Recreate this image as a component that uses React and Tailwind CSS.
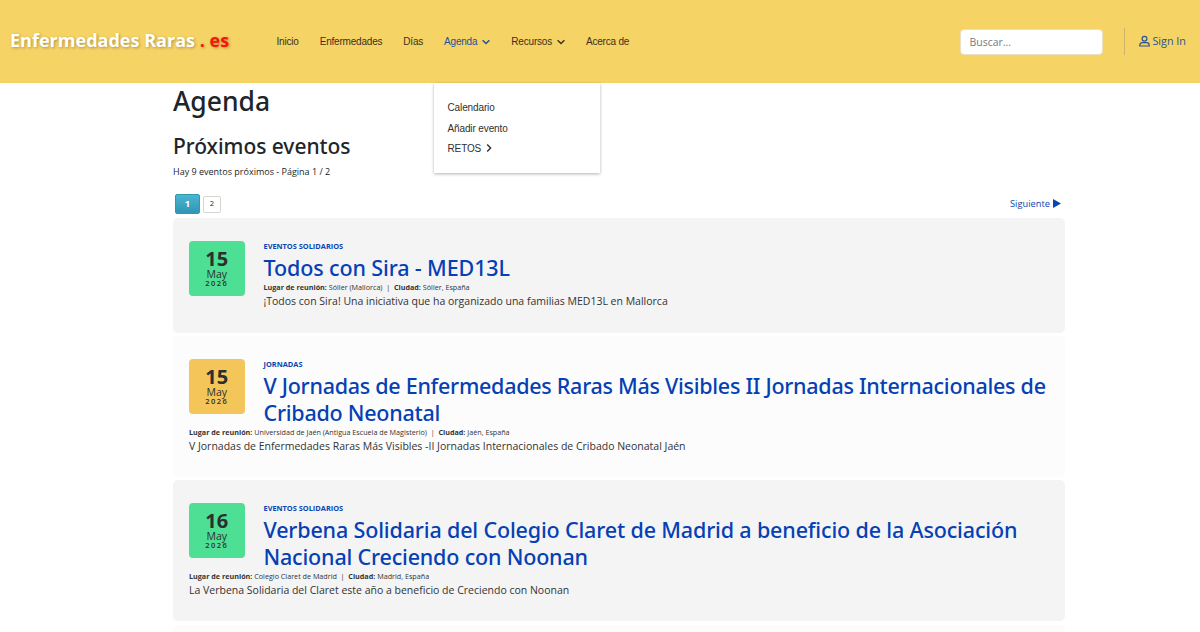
import React from "react";

const events = [
  {
    day: "15",
    category: "EVENTOS SOLIDARIOS",
    title: [{ text: "Todos con Sira - MED13L", tracking: "tracking-[-0.12px]" }],
    place: "Sóller (Mallorca)",
    city: "Sóller, España",
    text: "¡Todos con Sira! Una iniciativa que ha organizado una familias MED13L en Mallorca",
    card: "bg-[#f4f4f4] h-[114.5px]",
    badge: "bg-[#4de094]",
  },
  {
    day: "15",
    category: "JORNADAS",
    title: [
      { text: "V Jornadas de Enfermedades Raras Más Visibles II Jornadas Internacionales de", tracking: "tracking-[-0.27px]" },
      { text: "Cribado Neonatal", tracking: "tracking-[-0.25px]" },
    ],
    place: "Universidad de Jaén (Antigua Escuela de Magisterio)",
    city: "Jaén, España",
    text: "V Jornadas de Enfermedades Raras Más Visibles -II Jornadas Internacionales de Cribado Neonatal Jaén",
    card: "bg-[#fcfcfc] h-[140.5px]",
    badge: "bg-[#f4c65a]",
  },
  {
    day: "16",
    category: "EVENTOS SOLIDARIOS",
    title: [
      { text: "Verbena Solidaria del Colegio Claret de Madrid a beneficio de la Asociación", tracking: "tracking-[-0.155px]" },
      { text: "Nacional Creciendo con Noonan", tracking: "tracking-[-0.18px]" },
    ],
    place: "Colegio Claret de Madrid",
    city: "Madrid, España",
    text: "La Verbena Solidaria del Claret este año a beneficio de Creciendo con Noonan",
    card: "bg-[#f4f4f4] h-[141px]",
    badge: "bg-[#4de094]",
  },
];

function Chevron({ className }) {
  return (
    <svg viewBox="0 0 8 8" className={className} fill="none" stroke="currentColor" strokeWidth="1.4">
      <path d="M0.6 2.2 L4 5.6 L7.4 2.2" />
    </svg>
  );
}

function Header() {
  return (
    <header className="flex h-[83px] items-center bg-[#f6d365] pr-[14px] pl-[10px]">
      <div className="w-[266.5px] pb-[3px] text-[18px] font-bold tracking-[0.02px] whitespace-nowrap text-white [text-shadow:1px_1px_3px_rgba(0,0,0,0.3)]">
        Enfermedades Raras <span className="text-[#fb1508]">. es</span>
      </div>
      <nav className="relative flex items-center gap-[21px] font-['Liberation_Sans',sans-serif] text-[10px] tracking-[-0.2px] text-[#3a3120]">
        <a>Inicio</a>
        <a>Enfermedades</a>
        <a>Días</a>
        <a className="flex items-center gap-[5px] text-[#21509b]">
          Agenda <Chevron className="size-2" />
        </a>
        <a className="flex items-center gap-[5px]">
          Recursos <Chevron className="size-2" />
        </a>
        <a>Acerca de</a>
        <div className="absolute top-[49px] left-[157px] flex h-[90px] w-[166px] flex-col bg-white pt-[15px] pl-[14px] leading-[20.6px] tracking-[-0.12px] text-[#303030] shadow-[0_1px_3px_rgba(0,0,0,0.3)]">
          <a>Calendario</a>
          <a>Añadir evento</a>
          <a className="flex items-center gap-[4px]">
            RETOS <Chevron className="mb-[2px] size-2 -rotate-90" />
          </a>
        </div>
      </nav>
      <input
        className="mr-px ml-auto h-[26px] w-[143px] rounded-[4px] border border-[#eadfc0] bg-white px-2 text-[10.5px] placeholder:text-[#757b82]"
        placeholder="Buscar..."
      />
      <div className="ml-[20px] flex h-[27px] items-center gap-[2px] border-l border-[#cdb46c] pl-[14px] text-[10.8px] text-[#29548f]">
        <svg viewBox="0 0 11 12" className="mb-px h-3 w-[11px]" fill="none" stroke="currentColor" strokeWidth="1.2">
          <circle cx="5.5" cy="3.7" r="2.4" />
          <path d="M0.8 11 V10.2 Q0.8 7.7 3.3 7.7 H7.7 Q10.2 7.7 10.2 10.2 V11 Z" />
        </svg>
        Sign In
      </div>
    </header>
  );
}

function EventCard({ event }) {
  return (
    <article className={`shrink-0 rounded-[5px] px-4 pt-[22px] ${event.card}`}>
      <div className={`float-left mt-[0.5px] mr-[19px] flex h-[55px] w-[55.5px] flex-col items-center rounded-[4px] pt-[7px] text-[#2c2f2d] ${event.badge}`}>
        <span className="text-[20px] leading-[21px] font-bold">{event.day}</span>
        <span className="text-[10.5px] leading-[10px]">May</span>
        <span className="text-[7.5px] leading-[9px] font-semibold tracking-[1.4px]">2026</span>
      </div>
      <div className="text-[7.4px] leading-[13px] font-bold text-[#0b45b0]">{event.category}</div>
      <h3 className="mt-[0.5px] mb-[0.5px] font-['Noto_Sans',sans-serif] text-[21.5px] leading-[27px] font-medium text-[#0540b4]">
        {event.title.map((line) => (
          <span key={line.text} className={`block whitespace-nowrap ${line.tracking}`}>{line.text}</span>
        ))}
      </h3>
      <div className="text-[7.2px] leading-[13px] whitespace-pre text-[#333]">
        <b>Lugar de reunión:</b> {event.place}{"  |  "}<b>Ciudad:</b> {event.city}
      </div>
      <p className="text-[10.5px] leading-[14px] whitespace-nowrap text-[#333]">{event.text}</p>
    </article>
  );
}

export default function App() {
  return (
    <div className="h-[632px] w-[1200px] overflow-hidden bg-white font-['Open_Sans',sans-serif] text-[#212529]">
      <Header />
      <main className="ml-[173px] w-[892px]">
        <h1 className="h-[45px] font-['Noto_Sans',sans-serif] text-[26.5px] leading-[37px] font-medium">Agenda</h1>
        <h2 className="font-['Noto_Sans',sans-serif] text-[21px] leading-[36px] font-medium tracking-[-0.04px]">Próximos eventos</h2>
        <p className="text-[9px] leading-[15px]">Hay 9 eventos próximos - Página 1 / 2</p>
        <div className="flex h-[39px] items-center pt-[11px] pl-[2px]">
          <span className="flex h-[20px] w-[25px] items-center justify-center rounded-[2px] border border-[#3596b0] bg-linear-to-b from-[#49b6d2] to-[#2f96b4] text-[9.5px] font-bold text-white">1</span>
          <span className="ml-[3px] flex h-[17px] w-[18px] items-center justify-center rounded-[2px] border border-[#d5d5d5] text-[7.5px]">2</span>
          <a className="ml-auto flex items-center gap-[3px] pr-[4px] text-[9.3px] text-[#0b45b0]">
            Siguiente
            <svg viewBox="0 0 8 9" className="mb-px h-[9px] w-2" fill="currentColor"><path d="M0 0 L8 4.5 L0 9 Z" /></svg>
          </a>
        </div>
        <section className="flex flex-col gap-[3.5px]">
          {events.map((event) => (
            <EventCard key={event.text} event={event} />
          ))}
          <div className="h-[20px] rounded-[5px] bg-[#fcfcfc]" />
        </section>
      </main>
    </div>
  );
}
